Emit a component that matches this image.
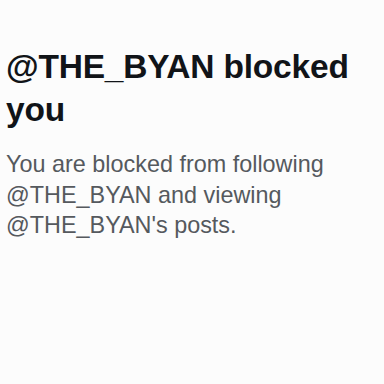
export default function App() {
  return (
    <div className="w-[384px] h-[384px] overflow-hidden bg-[#fcfcfc] px-[6px] pt-[45px] font-['Liberation_Sans',Arial,sans-serif]">
      <h1 className="text-[33.5px] leading-[43px] font-bold text-[#111418] tracking-[-0.2px]">
        @THE_BYAN blocked you
      </h1>
      <p className="mt-[18px] text-[23.4px] leading-[30.5px] text-[#55595e]">
        You are blocked from following @THE_BYAN and viewing @THE_BYAN's posts.
      </p>
    </div>
  )
}
